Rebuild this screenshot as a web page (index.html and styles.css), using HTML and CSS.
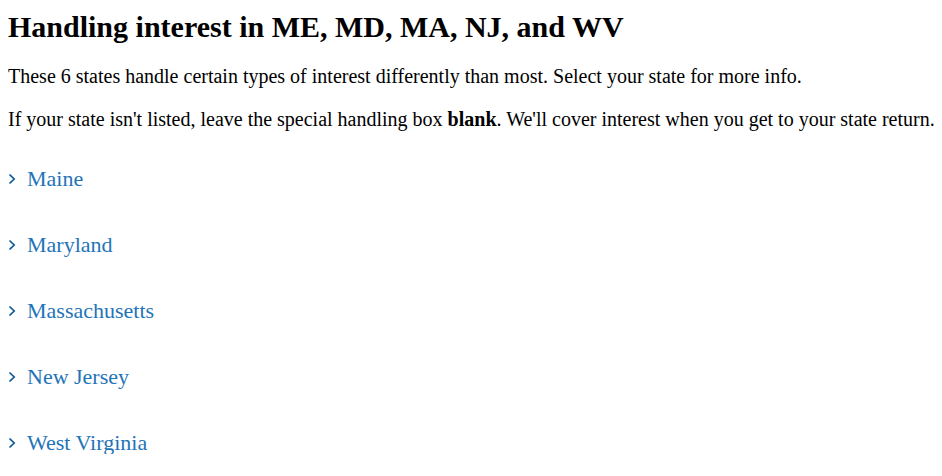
FILE: index.html
```html
<!DOCTYPE html>
<html>
<head>
<meta charset="utf-8">
<link rel="stylesheet" href="styles.css">
</head>
<body>
<h2 class="title">Handling interest in ME, MD, MA, NJ, and WV</h2>
<p class="text">These 6 states handle certain types of interest differently than most. Select your state for more info.</p>
<p class="text">If your state isn't listed, leave the special handling box <b>blank</b>. We'll cover interest when you get to your state return.</p>
<ul class="states">
  <li class="state"><svg class="chev" viewBox="0 0 8 12" width="8" height="12"><path d="M1.5 1.5 L6.2 6 L1.5 10.5" fill="none" stroke="currentColor" stroke-width="1.7"/></svg><span class="name">Maine</span></li>
  <li class="state"><svg class="chev" viewBox="0 0 8 12" width="8" height="12"><path d="M1.5 1.5 L6.2 6 L1.5 10.5" fill="none" stroke="currentColor" stroke-width="1.7"/></svg><span class="name">Maryland</span></li>
  <li class="state"><svg class="chev" viewBox="0 0 8 12" width="8" height="12"><path d="M1.5 1.5 L6.2 6 L1.5 10.5" fill="none" stroke="currentColor" stroke-width="1.7"/></svg><span class="name">Massachusetts</span></li>
  <li class="state"><svg class="chev" viewBox="0 0 8 12" width="8" height="12"><path d="M1.5 1.5 L6.2 6 L1.5 10.5" fill="none" stroke="currentColor" stroke-width="1.7"/></svg><span class="name">New Jersey</span></li>
  <li class="state"><svg class="chev" viewBox="0 0 8 12" width="8" height="12"><path d="M1.5 1.5 L6.2 6 L1.5 10.5" fill="none" stroke="currentColor" stroke-width="1.7"/></svg><span class="name">West Virginia</span></li>
</ul>
</body>
</html>
```
FILE: styles.css
```css
body {
  margin: 8px;
  font-family: "Liberation Serif", "Times New Roman", serif;
  color: #000;
  background: #fff;
}
.title {
  font-size: 30px;
  font-weight: bold;
  margin: 2px 0 21px;
  line-height: 34px;
}
.text {
  font-size: 20px;
  margin: 20px 0;
  line-height: 23px;
  white-space: nowrap;
}
.states {
  list-style: none;
  margin: 36px 0 0;
  padding: 0;
  display: flex;
  flex-direction: column;
  gap: 43px;
}
.state {
  display: flex;
  align-items: center;
  gap: 11px;
  font-size: 22px;
  line-height: 23px;
  color: #1f74b8;
}
.chev {
  color: #0d5797;
  flex: none;
}
```
